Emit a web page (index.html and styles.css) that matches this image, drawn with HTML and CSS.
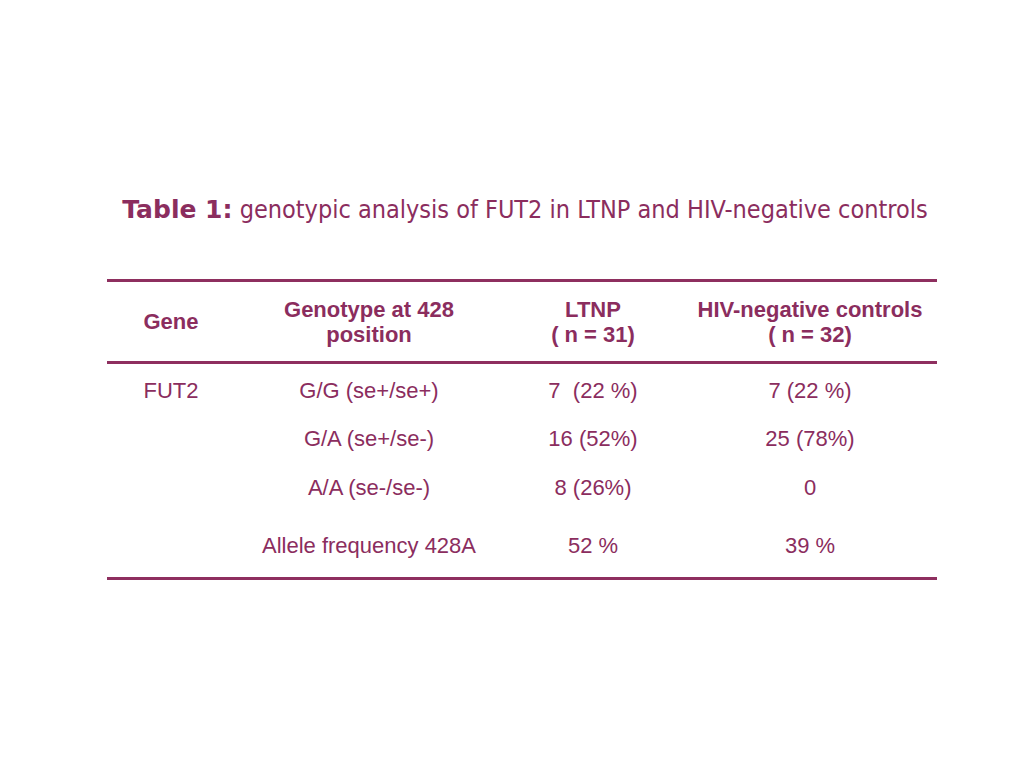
FILE: index.html
```html
<!DOCTYPE html>
<html>
<head>
<meta charset="utf-8">
<link rel="stylesheet" href="styles.css">
</head>
<body>
<div class="slide">
  <h1 class="title"><b>Table 1:</b> genotypic analysis of FUT2 in LTNP and HIV-negative controls</h1>
  <table class="data">
    <colgroup>
      <col class="c1"><col class="c2"><col class="c3"><col class="c4">
    </colgroup>
    <thead>
      <tr>
        <th>Gene</th>
        <th>Genotype at 428<br>position</th>
        <th>LTNP<br>( n = 31)</th>
        <th>HIV-negative controls<br>( n = 32)</th>
      </tr>
    </thead>
    <tbody>
      <tr class="r1"><td>FUT2</td><td>G/G (se+/se+)</td><td>7&nbsp; (22 %)</td><td>7 (22 %)</td></tr>
      <tr class="r2"><td></td><td>G/A (se+/se-)</td><td>16 (52%)</td><td>25 (78%)</td></tr>
      <tr class="r3"><td></td><td>A/A (se-/se-)</td><td>8 (26%)</td><td>0</td></tr>
      <tr class="r4"><td></td><td>Allele frequency 428A</td><td>52 %</td><td>39 %</td></tr>
    </tbody>
  </table>
</div>
</body>
</html>
```
FILE: styles.css
```css
html, body {
  margin: 0;
  padding: 0;
  background: #ffffff;
}
body {
  width: 1024px;
  height: 768px;
  overflow: hidden;
  color: #8b2d5e;
}
.slide {
  padding-top: 195px;
  padding-left: 107px;
  width: 830px;
}
.title {
  margin: 0 0 54px 0;
  padding-left: 6px;
  text-align: center;
  font-family: "DejaVu Sans Condensed", "DejaVu Sans", sans-serif;
  font-weight: normal;
  font-size: 25px;
  line-height: 30px;
  color: #8b2d5e;
  white-space: nowrap;
}
.title b {
  font-family: "DejaVu Sans", sans-serif;
  font-weight: bold;
}
.data {
  width: 830px;
  border-collapse: collapse;
  table-layout: fixed;
  font-family: "Liberation Sans", Arial, sans-serif;
  font-size: 22px;
  color: #8b2d5e;
  border-top: 3px solid #8e2f5f;
  border-bottom: 3px solid #8e2f5f;
}
.c1 { width: 128px; }
.c2 { width: 268px; }
.c3 { width: 180px; }
.c4 { width: 254px; }
.data th {
  font-weight: bold;
  font-size: 22px;
  line-height: 25px;
  height: 79px;
  padding: 0;
  text-align: center;
  vertical-align: middle;
  white-space: nowrap;
  border-bottom: 3px solid #8e2f5f;
}
.data td {
  padding: 0;
  text-align: center;
  vertical-align: middle;
  line-height: 25px;
  white-space: nowrap;
}
.r1 td { height: 48px; padding-top: 2px; }
.r2 td { height: 48px; }
.r3 td { height: 51px; }
.r4 td { height: 64px; }
```
